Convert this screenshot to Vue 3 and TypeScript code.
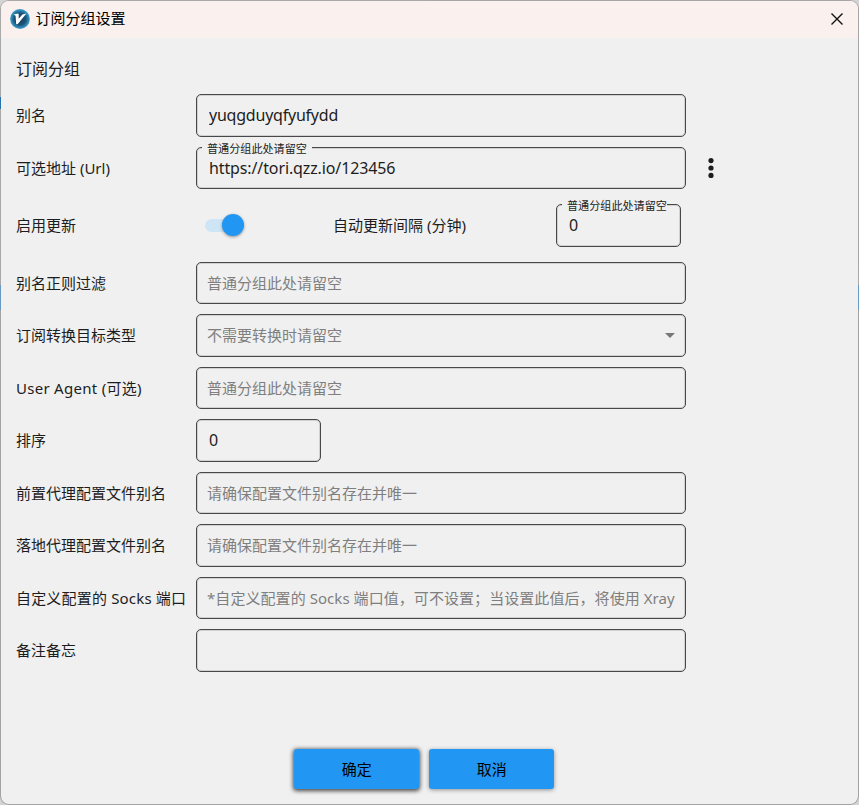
<script setup lang="ts">
import { reactive, ref } from 'vue'

interface Field {
  id: string
  label: string
  hint?: string
  kind?: 'select' | 'short'
}

const form = reactive<Record<string, string>>({
  remarks: 'yuqgduyqfyufydd',
  url: 'https://tori.qzz.io/123456',
  interval: '0',
  filter: '',
  target: '',
  agent: '',
  sort: '0',
  prev: '',
  next: '',
  socks: '',
  memo: '',
})
const enabled = ref(true)

const fields: Field[] = [
  { id: 'filter', label: '别名正则过滤', hint: '普通分组此处请留空' },
  { id: 'target', label: '订阅转换目标类型', hint: '不需要转换时请留空', kind: 'select' },
  { id: 'agent', label: 'User Agent (可选)', hint: '普通分组此处请留空' },
  { id: 'sort', label: '排序', kind: 'short' },
  { id: 'prev', label: '前置代理配置文件别名', hint: '请确保配置文件别名存在并唯一' },
  { id: 'next', label: '落地代理配置文件别名', hint: '请确保配置文件别名存在并唯一' },
  { id: 'socks', label: '自定义配置的 Socks 端口', hint: '*自定义配置的 Socks 端口值，可不设置；当设置此值后，将使用 Xray' },
  { id: 'memo', label: '备注备忘' },
]
</script>

<template>
  <div class="desktop">
    <div class="window">
      <header class="titlebar">
        <svg class="logo" viewBox="0 0 20 20">
          <defs>
            <radialGradient id="disc">
              <stop offset="0" stop-color="#173f5c" />
              <stop offset=".6" stop-color="#1b5377" />
              <stop offset=".85" stop-color="#2b86b4" />
              <stop offset="1" stop-color="#3f9cc9" />
            </radialGradient>
          </defs>
          <circle cx="10" cy="10" r="9.9" fill="url(#disc)" />
          <path d="M3.6 5.4 8 4.4 8.7 5.2 8.7 9.8 12.4 5.4 16.4 4.6 7.8 15 6.2 15.2 5.6 6.7Z" fill="#fff" />
        </svg>
        <span class="caption">订阅分组设置</span>
        <svg class="close" viewBox="0 0 12 12">
          <path d="M.5.5 11.5 11.5M11.5.5.5 11.5" stroke="#111" stroke-width="1.35" fill="none" />
        </svg>
      </header>

      <main class="body">
        <h1 class="heading">订阅分组</h1>
        <div class="row">
          <label class="label">别名</label>
          <div class="box"><input v-model="form.remarks" class="input name" spellcheck="false" /></div>
        </div>
        <div class="row">
          <label class="label">可选地址 (Url)</label>
          <div class="box floating">
            <span class="float-hint">普通分组此处请留空</span>
            <input v-model="form.url" class="input url" spellcheck="false" />
          </div>
          <svg class="more" viewBox="0 0 6 20">
            <circle cx="3" cy="2.6" r="2.6" /><circle cx="3" cy="10" r="2.6" /><circle cx="3" cy="17.4" r="2.6" />
          </svg>
        </div>
        <div class="row update">
          <label class="label">启用更新</label>
          <button class="toggle" :class="{ on: enabled }" @click="enabled = !enabled"><span class="thumb"></span></button>
          <label class="label interval">自动更新间隔 (分钟)</label>
          <div class="box short floating">
            <span class="float-hint">普通分组此处请留空</span>
            <input v-model="form.interval" class="input" />
          </div>
        </div>
        <div v-for="f in fields" :key="f.id" class="row">
          <label class="label" :class="f.id">{{ f.label }}</label>
          <div class="box" :class="{ short: f.kind === 'short' }">
            <input v-model="form[f.id]" class="input" :class="[f.id, { empty: !form[f.id] }]" :placeholder="f.hint" />
            <svg v-if="f.kind === 'select'" class="arrow" viewBox="0 0 10 5"><path d="M0 0H10L5 5Z" /></svg>
          </div>
        </div>
      </main>

      <footer class="actions">
        <button class="btn primary">确定</button>
        <button class="btn">取消</button>
      </footer>
    </div>
  </div>
</template>

<style>
body {
  margin: 0;
  overflow: hidden;
}
</style>

<style scoped>
.desktop {
  box-sizing: border-box;
  width: 859px;
  height: 805px;
  background: #d3d3d3;
  font-family: 'Noto Sans', 'Noto Sans CJK SC', sans-serif;
  color: #1d1d1d;
}
.window {
  box-sizing: border-box;
  width: 859px;
  height: 805px;
  display: flex;
  flex-direction: column;
  border: 1px solid transparent;
  border-radius: 9px;
  background:
    linear-gradient(#f0f0f0, #f0f0f0) padding-box,
    linear-gradient(90deg, transparent 50%, #a6a6a6 50%) 0 0 / 100% 270px no-repeat border-box,
    linear-gradient(#a9a9a9 97px, #2472ae 97px 109px, #a9a9a9 109px 285px, #6899c2 285px 310px, #a3a3a3 310px) border-box;
  overflow: hidden;
}
.titlebar {
  height: 37px;
  flex: none;
  box-sizing: border-box;
  display: flex;
  align-items: center;
  padding: 0 15px 1px 9px;
  background: #faf0ed;
}
.logo {
  width: 20px;
  height: 20px;
}
.caption {
  flex: 1;
  margin: 0 0 2px 5.5px;
  font-size: 15px;
  line-height: 20px;
  color: #000;
}
.close {
  width: 12px;
  height: 12px;
}
.body {
  padding: 20px 15px 0;
  display: flex;
  flex-direction: column;
}
.heading {
  margin: 0 0 14.1px;
  height: 22px;
  font-size: 16px;
  line-height: 22px;
  font-weight: 400;
}
.row {
  display: flex;
  align-items: center;
  height: 42.5px;
  margin-bottom: 10px;
}
.row.update {
  margin: 5px 0 15px;
}
.label {
  width: 180px;
  flex: none;
  font-size: 15px;
  line-height: 20px;
  white-space: nowrap;
}
.label.interval {
  width: 223px;
}
.label.agent {
  letter-spacing: 0.28px;
}
.label.socks {
  letter-spacing: 0.18px;
}
.box {
  position: relative;
  box-sizing: border-box;
  width: 490px;
  height: 42.5px;
  flex: none;
  display: flex;
  align-items: center;
  border: 1px solid #484848;
  border-radius: 5px;
  box-shadow: inset 0 0 0 1px rgba(0, 0, 0, 0.13);
}
.box.short {
  width: 125px;
}
.input {
  width: 100%;
  min-width: 0;
  height: 24px;
  box-sizing: border-box;
  padding: 0 0 0 12px;
  border: 0;
  outline: 0;
  background: none;
  font: inherit;
  font-size: 16px;
  color: #1d1d1d;
}
.input.name {
  letter-spacing: -0.22px;
}
.input.url {
  letter-spacing: -0.12px;
}
.input.empty {
  padding: 0 9px 0 10px;
  font-size: 15px;
}
.input.socks {
  letter-spacing: 0.06px;
}
.input::placeholder {
  color: #7f7f7f;
  opacity: 1;
}
.float-hint {
  position: absolute;
  left: 5px;
  top: -7px;
  padding: 0 5px;
  background: #f0f0f0;
  font-size: 11.1px;
  line-height: 16px;
  white-space: nowrap;
}
.short .float-hint {
  padding-right: 0;
}
.more {
  width: 6px;
  height: 20px;
  margin-left: 22px;
  fill: #1d1d1d;
}
.toggle {
  box-sizing: border-box;
  width: 38.5px;
  height: 13px;
  margin: 0 89.5px 0 9px;
  padding: 0;
  border: 0;
  border-radius: 7px;
  background: #cfcfcf;
  display: flex;
  align-items: center;
}
.toggle.on {
  background: #cde5f5;
  justify-content: flex-end;
}
.thumb {
  width: 22px;
  height: 22px;
  border-radius: 50%;
  background: #2196f3;
  box-shadow: 0 1px 3px rgba(0, 0, 0, 0.4);
}
.arrow {
  width: 10px;
  height: 5px;
  margin-right: 10px;
  flex: none;
  fill: #777;
}
.actions {
  display: flex;
  justify-content: center;
  gap: 10px;
  margin-top: 67px;
  padding-right: 10.4px;
}
.btn {
  width: 125px;
  height: 40px;
  padding: 0;
  border: 0;
  border-radius: 3px;
  background: #2196f3;
  font: inherit;
  font-size: 15px;
  color: #000;
  box-shadow: 0 1px 4px rgba(0, 0, 0, 0.4);
}
.btn.primary {
  box-shadow: 0 1px 4px 1px rgba(0, 0, 0, 0.7);
}
</style>
